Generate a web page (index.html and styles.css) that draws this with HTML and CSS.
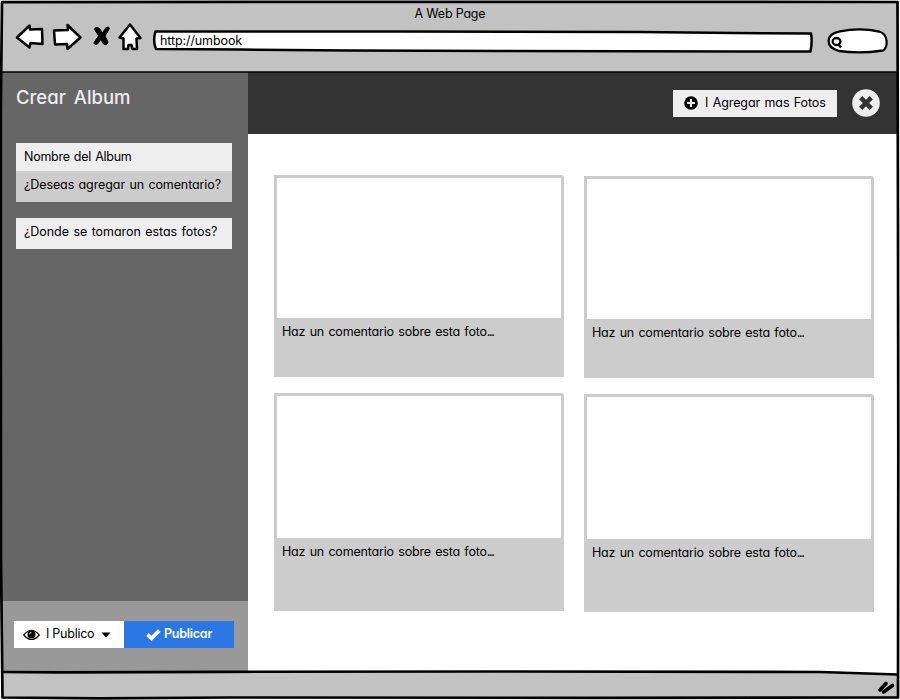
FILE: index.html
```html
<!DOCTYPE html>
<html lang="es">
<head>
<meta charset="utf-8">
<title>A Web Page</title>
<link rel="stylesheet" href="styles.css">
</head>
<body>
<div class="window">
  <header class="chrome">
    <div class="title"><span>A Web Page</span></div>
    <div class="toolbar">
      <svg class="nav" width="132" height="34" viewBox="12 20 132 34" fill="#fff" stroke="#000" stroke-width="2.500" stroke-linejoin="round" stroke-linecap="round">
        <path d="M17 37.500L29.500 25.500L30 29.500L42 29L42.500 44L30.500 43L29.500 47.500Z"/>
        <path d="M54 30.500L68 30L67.500 25L80.500 37.500L67.500 49L67 44L55 44.500Z"/>
        <path d="M130 24.500L140.500 38L136.500 38.500L137 49H132.500L131.500 45H128.500L128 49H123.500V38.500L119.500 37.500Z"/>
        <path fill="#000" stroke-width="1" d="M94.500 29Q95.500 26 99.500 28.500L102.500 33L106 27.500Q109 26 109.500 28.500L105 36L108 42Q107 46 103.500 44L100.800 39.500L97.500 44Q94 45.500 94 42.500L98.500 36Z"/>
      </svg>
      <div class="address">
        <svg class="outline" width="662" height="26" viewBox="152 28 662 26"><path fill="#fff" stroke="#000" stroke-width="2.500" stroke-linejoin="round" d="M155.500 31.500L400 31.500L640 32L735 33L811 33.500Q812.500 41 810.500 51.500L740 51.500L500 51L350 50.500L240 49.500L156 49Q152.500 41 155.500 31.500Z"/></svg>
        <span>http://umbook</span>
      </div>
      <svg class="search" width="64" height="30" viewBox="826 26 64 30" fill="#fff" stroke="#000" stroke-width="2.300">
        <path d="M840 31.300Q860 27.500 879 31.500C889 34 888 48 883 50.500Q860 54 839 51C825 47 825 34 840 31.300Z"/>
        <ellipse cx="836.500" cy="41.500" rx="3.900" ry="3.500"/><path d="M838 44L841 47.500"/>
      </svg>
    </div>
  </header>
  <div class="body">
    <aside class="sidebar">
      <div class="form">
        <h1>Crear Album</h1>
        <div class="field name"><span>Nombre del Album</span></div>
        <div class="field comment"><span>¿Deseas agregar un comentario?</span></div>
        <div class="field place"><span>¿Donde se tomaron estas fotos?</span></div>
      </div>
      <div class="actions">
        <div class="privacy">
          <svg width="17" height="12" viewBox="0 0 17 12"><path d="M.8 6Q8.500-3.500 16.200 6Q8.500 15 .8 6Z" fill="#fff" stroke="#000" stroke-width="1.200"/><circle cx="8.500" cy="5.500" r="4" /><path d="M6.500 5.200Q6.700 3.500 8.400 3.300" fill="none" stroke="#fff"/></svg>
          <span>I Publico</span>
          <svg class="caret" width="10" height="6" viewBox="0 0 10 6"><path d="M.5.500H9.500L5 5.500Z"/></svg>
        </div>
        <div class="publish">
          <svg width="15" height="12" viewBox="0 0 15 12"><path d="M1.500 5.500L5.500 9.300L13.300 1.500" fill="none" stroke="#fff" stroke-width="3.800"/></svg>
          <span>Publicar</span>
        </div>
      </div>
    </aside>
    <main class="content">
      <div class="bar">
        <div class="add">
          <svg width="14" height="14" viewBox="0 0 14 14"><circle cx="7" cy="7" r="6.800"/><path d="M7 3V11M3 7H11" stroke="#eee" stroke-width="2.200"/></svg>
          <span>I Agregar mas Fotos</span>
        </div>
        <svg class="close" width="28" height="28" viewBox="0 0 28 28"><circle cx="14" cy="14" r="13.800" fill="#eee"/><path d="M8.700 8.700L19.300 19.300M19.300 8.700L8.700 19.300" stroke="#333" stroke-width="4.600"/></svg>
      </div>
      <div class="album">
        <div class="column">
          <div class="card"><div class="photo"></div><span>Haz un comentario sobre esta foto<i>...</i></span></div>
          <div class="card tall"><div class="photo"></div><span>Haz un comentario sobre esta foto<i>...</i></span></div>
        </div>
        <div class="column second">
          <div class="card"><div class="photo"></div><span>Haz un comentario sobre esta foto<i>...</i></span></div>
          <div class="card tall"><div class="photo"></div><span>Haz un comentario sobre esta foto<i>...</i></span></div>
        </div>
      </div>
    </main>
  </div>
  <footer class="status"></footer>
  <svg class="frame" width="900" height="700" viewBox="0 0 900 700" fill="none" stroke="#000" stroke-width="2.700" stroke-linejoin="round">
    <path d="M2 2.200L250 1.800L600 1.800L897.500 2L898 230L898.300 450L898 697.500L600 697.800L230 697.500L100 698.300L2.500 697.500L1 560L.8 300L.8 110Z"/>
    <path stroke-width="1.600" d="M2 72H898"/>
    <path d="M2 672L60 672.300L220 671.800L500 671.500L820 672L898 674.500"/>
    <path d="M880 690L886 683.500M883.500 692L892.500 685.500" stroke-width="3.700" stroke-linecap="round"/>
  </svg>
</div>
</body>
</html>
```
FILE: styles.css
```css
* { box-sizing: border-box; }
body { margin: 0; background: #fff; color: #000; font: 12.5px/16px Inter, "Open Sans", sans-serif; font-feature-settings: "cv11", "ss03"; }
span { white-space: nowrap; }
.window { position: relative; width: 900px; height: 700px; display: flex; flex-direction: column; overflow: hidden; padding: 2px; }
.chrome { height: 70px; background: #c2c2c2; flex: none; }
.title { height: 18px; text-align: center; padding-top: 4px; letter-spacing: -.2px; }
.toolbar { display: flex; align-items: flex-start; padding-left: 10px; }
.nav { margin-right: 8px; }
.address { position: relative; width: 662px; height: 26px; margin-top: 8px; padding: 5px 8px; letter-spacing: -.1px; }
.outline { position: absolute; left: 0; top: 0; }
.address span { position: relative; display: block; }
.search { margin: 6px 0 0 12px; }
.body { flex: none; height: 599px; display: flex; }
.sidebar { width: 246px; display: flex; flex-direction: column; background: #666; }
.form { height: 529px; padding: 0 16px 0 14px; }
h1 { margin: 0; height: 71px; padding-top: 13px; color: #eee; font-size: 18.5px; line-height: 24px; font-weight: 500; word-spacing: 3px; }
.field { padding: 6px 8px; background: #eee; }
.name { height: 28px; letter-spacing: -.25px; word-spacing: .8px; }
.comment { height: 31px; background: #ccc; letter-spacing: -.1px; word-spacing: 1px; }
.place { height: 31px; margin-top: 16px; letter-spacing: -.05px; word-spacing: 1px; }
.actions { flex: 1; display: flex; background: #999; padding: 20px 12px; }
.privacy, .publish { width: 110px; height: 27px; display: flex; align-items: center; }
.privacy span, .publish span { position: relative; top: -1px; letter-spacing: -.25px; }
.privacy { background: #fff; padding-left: 9px; gap: 6px; }
.publish { background: #2b78e4; color: #fff; font-weight: 600; padding-left: 22px; gap: 3px; }
.caret { margin-left: 1px; }
.content { flex: 1; background: #fff; }
.bar { height: 62px; background: #333; display: flex; justify-content: flex-end; align-items: center; padding-right: 18px; gap: 15px; }
.add { width: 164px; height: 27px; background: #eee; display: flex; align-items: center; padding-left: 11px; gap: 7px; letter-spacing: -.1px; word-spacing: 1px; }
.album { display: flex; gap: 20px; padding: 41px 0 0 26px; }
.column { display: flex; flex-direction: column; gap: 16px; }
.second { padding-top: 1px; }
.card { width: 290px; height: 202px; background: #ccc; padding: 3px; border-top-right-radius: 3px; }
.photo { height: 140px; background: #fff; margin-bottom: 6px; }
.card span { display: block; margin-left: 5px; letter-spacing: -.18px; word-spacing: 1px; }
.card i { font-style: normal; letter-spacing: -1.4px; }
.tall { height: 218px; }
.tall .photo { height: 142px; }
.status { height: 27px; background: #c2c2c2; clip-path: polygon(0 0, 820px 0, 100% 3px, 100% 100%, 0 100%); }
.frame { position: absolute; left: 0; top: 0; pointer-events: none; }
```
